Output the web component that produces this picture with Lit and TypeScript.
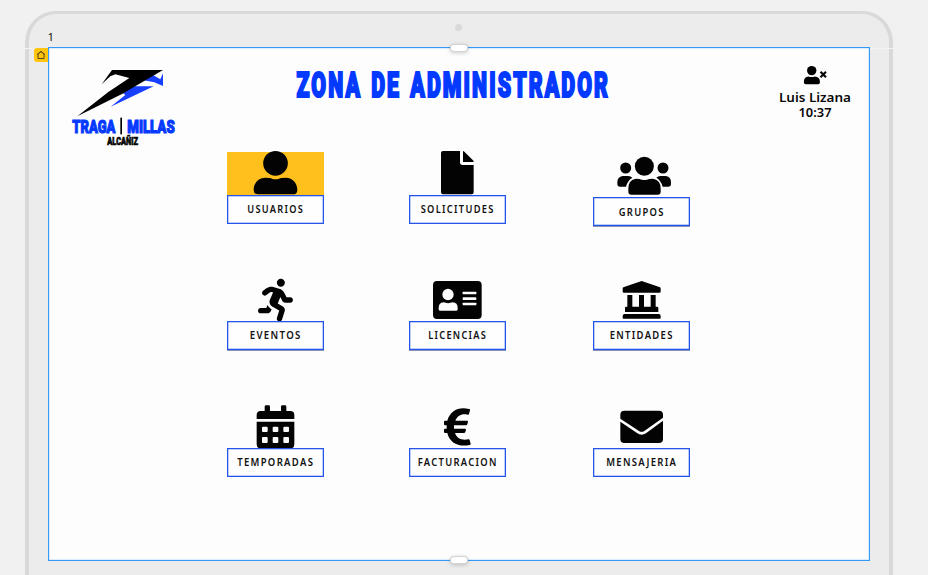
import { LitElement, html, svg, css, TemplateResult } from "lit";
import { customElement, property } from "lit/decorators.js";

interface Tile {
  label: string;
  length: number;
  viewBox: string;
  art: TemplateResult;
  active?: boolean;
  low?: boolean;
  shaded?: boolean;
}

const tiles: Tile[] = [
  {
    label: "USUARIOS", length: 56, viewBox: "21 18 291 132", active: true,
    art: svg`<circle cx="166.5" cy="55" r="37"/><path d="M136 98q15 0 20 3q10 3 21 0q5-3 20-3c22 0 35 18 35 36q0 14-13 14H114q-13 0-13-14c0-18 13-36 35-36z"/>`,
  },
  {
    label: "SOLICITUDES", length: 73, viewBox: "567 18 291 132",
    art: svg`<path d="M669 18H720V52q0 8 8 8H761V142q0 6-6 6H669q-6 0-6-6V24q0-6 6-6zM729 18q2 0 4 2L759 46q2 2 2 5H729z"/>`,
  },
  {
    label: "GRUPOS", length: 45, viewBox: "24 18 291 138", low: true, shaded: true,
    art: svg`<circle cx="178" cy="64" r="28.5"/><circle cx="122" cy="69" r="16.5"/><circle cx="234" cy="69" r="16.5"/><path d="M153 101q12 0 17 3q8 2 16 0q5-3 17-3q24 3 24 30v9q0 9-9 9H139q-9 0-9-9v-9q0-27 23-30zM113 93h17q7 0 12 5q-14 8-19 27H104q-7 0-7-7v-6q0-17 16-19zM243 93h-17q-7 0-12 5q14 8 19 27h18q7 0 7-7v-6q0-17-15-19z"/>`,
  },
  {
    label: "EVENTOS", length: 51, viewBox: "21 21 291 132", shaded: true,
    art: svg`<path transform="translate(114 26) scale(.252 .25)" d="M272 96c26.51 0 48-21.49 48-48S298.51 0 272 0s-48 21.49-48 48 21.49 48 48 48zM113.69 317.47l-14.8 34.52H32c-17.67 0-32 14.33-32 32s14.33 32 32 32h77.45c19.25 0 36.58-11.44 44.11-29.09l8.79-20.52-10.67-6.3c-17.32-10.23-30.06-25.37-37.99-42.61zM384 223.99h-44.03l-26.06-53.25c-12.5-25.55-35.45-44.23-61.78-50.94l-71.08-21.14c-28.3-6.8-57.77-.55-80.84 17.14l-39.67 30.41c-14.03 10.75-16.69 30.83-5.94 44.86s30.84 16.69 44.86 5.94l39.66-30.41c7.67-5.89 17.44-8 25.27-6.14l14.7 4.37-37.46 87.39c-12.62 29.48-1.31 64.01 26.3 80.31l84.98 50.17-27.47 87.73c-5.28 16.86 4.11 34.82 20.97 40.09 3.19 1 6.41 1.48 9.58 1.48 13.61 0 26.23-8.77 30.52-22.45l31.64-101.06c5.91-20.77-2.89-43.08-21.64-54.39l-61.24-36.14 31.31-78.28 20.27 41.43c8 16.34 24.92 26.89 43.11 26.89H384c17.67 0 32-14.33 32-32s-14.33-31.99-32-31.99z"/>`,
  },
  {
    label: "LICENCIAS", length: 58, viewBox: "567 21 291 132", shaded: true,
    art: svg`<rect x="639" y="33" width="146" height="114" rx="12"/><g fill="#fdfdfd"><circle cx="684" cy="73.500" r="17"/><path d="M671 97q13 5 27 0q15 1 15 17v4q0 4-4 4H660q-4 0-4-4v-4q0-16 15-17z"/><rect x="728" y="65" width="41" height="8" rx="2"/><rect x="728" y="82" width="41" height="8" rx="2"/><rect x="728" y="98" width="41" height="8" rx="2"/></g>`,
  },
  {
    label: "ENTIDADES", length: 63, viewBox: "24 21 291 132", shaded: true,
    art: svg`<path d="M170 33l55 19q2 1 2 4v9q0 3-4 3H117q-4 0-4-3v-9q0-3 2-4zM127 75h15v35h20V75h15v35h20V75h15v35h4q4 0 4 4v12H120v-12q0-4 4-4h3zM119 132h102q6 0 6 6v5q0 3-3 3H116q-3 0-3-3v-5q0-6 6-6z"/>`,
  },
  {
    label: "TEMPORADAS", length: 76, viewBox: "21 18 291 132",
    art: svg`<path d="M134 26q0-4 4-4h8q4 0 4 4v13h33V26q0-4 4-4h8q4 0 4 4v13h12q12 0 12 12v12H110V51q0-12 12-12h12z"/><path fill-rule="evenodd" d="M110 71H223V139q0 12-12 12H122q-12 0-12-12zM129 86q-3 0-3 3v10q0 3 3 3h11q3 0 3-3v-10q0-3-3-3zm32 0q-3 0-3 3v10q0 3 3 3h11q3 0 3-3v-10q0-3-3-3zm32 0q-3 0-3 3v10q0 3 3 3h11q3 0 3-3v-10q0-3-3-3zM129 117q-3 0-3 3v12q0 3 3 3h11q3 0 3-3v-12q0-3-3-3zm32 0q-3 0-3 3v12q0 3 3 3h11q3 0 3-3v-12q0-3-3-3zm32 0q-3 0-3 3v12q0 3 3 3h11q3 0 3-3v-12q0-3-3-3z"/>`,
  },
  {
    label: "FACTURACION", length: 79, viewBox: "567 16 291 132",
    art: svg`<path d="M748 31q3 0 2 4l-3 11q-1 3-4 2c-18-4-31 3-37 18h35q3 0 3 3l-2 8q-1 3-4 3h-36v10h33q3 0 3 3l-2 7q-1 3-4 3h-27c5 15 19 23 40 19q3-1 4 2l3 11q1 3-3 4c-33 7-60-6-67-36h-7q-3 0-3-3v-7q0-3 3-3h5V80h-5q-3 0-3-3v-8q0-3 3-3h7c8-29 34-43 65-35z"/>`,
  },
  {
    label: "MENSAJERIA", length: 70, viewBox: "24 18 291 132",
    art: svg`<path d="M118 38H222q12 0 12 12v9L179 98q-9 7-18 0L106 62V50q0-12 12-12zM106 71L156 105q14 10 28 0L234 68v55q0 12-12 12H118q-12 0-12-12z"/>`,
  },
];

@customElement("menu-tile")
export class MenuTile extends LitElement {
  @property({ attribute: false }) tile!: Tile;

  static styles = css`
    :host { display: block; width: 97px; }
    .icon { display: block; width: 97px; height: 44px; fill: #030303; }
    .low .icon { height: 46px; }
    .active .icon { background: linear-gradient(transparent 1px, #ffc01e 1px); }
    .button {
      box-sizing: border-box; display: block; width: 97px; height: 29px;
      padding: 0; border: 1px solid #2454ea; background: #fefefe;
      box-shadow: inset 0 0 0 0.5px #7c9cf5;
    }
    .shaded .button { box-shadow: 0 1px 0 #8a91b4, inset 0 0 0 0.5px #7c9cf5; }
    .caption { display: block; width: 95px; height: 27px; overflow: visible; }
    .caption text {
      font: 600 10.8px "Noto Sans", sans-serif; letter-spacing: 1.5px; fill: #111;
    }
  `;

  render() {
    const t = this.tile;
    return html`<div class="${t.active ? "active" : ""} ${t.low ? "low" : ""} ${t.shaded ? "shaded" : ""}">
      <svg class="icon" viewBox=${t.viewBox} preserveAspectRatio="none">${t.art}</svg>
      <button class="button">
        <svg class="caption" viewBox="0 0 95 27">
          <text x=${47.2 - t.length / 2} y=${t.low ? 17.8 : 16.8} textLength=${t.length + 1} lengthAdjust="spacingAndGlyphs">${t.label}</text>
        </svg>
      </button>
    </div>`;
  }
}

@customElement("app-root")
export class AppRoot extends LitElement {
  static styles = css`
    :host {
      display: block; width: 928px; height: 575px; overflow: hidden;
      background: #f1f1f1; box-sizing: border-box; padding: 11px 0 0 25px;
    }
    .device {
      position: relative; box-sizing: border-box; width: 868px; height: 620px;
      padding: 33px 19px 0 19px; border: solid #d9d9d9; border-width: 3px 4px; border-radius: 31px; background: #ececec;
    }
    .seam { position: absolute; left: -4px; right: -4px; top: 34px; height: 1px; background: #f3f3f3; }
    .camera { position: absolute; left: 426px; top: 10px; width: 7px; height: 7px; border-radius: 50%; background: #d9d9d9; }
    .page-number { position: absolute; left: 18.5px; top: 16px; font: 11.5px/13px "Noto Sans", sans-serif; color: #111; }
    .home {
      position: absolute; left: 5px; top: 34px; width: 14px; height: 14px;
      border-radius: 3px 0 0 3px; background: #ffc40c;
    }
    .home svg { display: block; width: 14px; height: 14px; }
    .screen {
      position: relative; box-sizing: border-box; width: 822px; height: 514px;
      border: 1px solid #369af5; background: #fdfdfd; box-shadow: inset 0 0 0 0.5px #b9dcfb;
    }
    .handle {
      position: absolute; left: 402px; width: 16px; height: 6px; border-radius: 4px;
      background: #fff; box-shadow: 0 0 0 1px #d4d4d4, 0 1px 4px 1px rgba(0, 0, 0, 0.2);
    }
    .top { top: -3px; }
    .bottom { bottom: -3px; }
    .header { display: flex; height: 103px; padding-left: 21px; }
    .logo { width: 108px; height: 82px; margin-top: 18px; overflow: visible; }
    .title { width: 324px; height: 45px; margin: 14px 0 0 112px; overflow: visible; }
    .account { width: 90px; height: 60px; margin: 14px 0 0 156px; }
    .logo text { font-family: Roboto, sans-serif; font-weight: 900; stroke-width: 3.5px; }
    .title text { font: 900 35.5px Roboto, sans-serif; letter-spacing: 3.5px; word-spacing: 3px; fill: #0439ff; stroke: #0439ff; stroke-width: 2.2px; }
    .account text { font: 600 12.8px "Noto Sans", sans-serif; fill: #080808; }
    .blue { fill: #0439ff; stroke: #0439ff; }
    .logo .black { fill: #050505; stroke: #050505; stroke-width: 2px; }
    .menu {
      display: grid; grid-template-columns: 182px 184px 97px;
      grid-template-rows: 126px 127px 76px; padding-left: 178px;
    }
  `;

  render() {
    return html`<div class="device">
      <div class="seam"></div>
      <div class="camera"></div>
      <div class="page-number">1</div>
      <div class="home">
        <svg viewBox="0 0 14 14" fill="none" stroke="#544514"><path d="M4 10.500V6L7 3.500 10 6v4.500zM3 6.500L7 3.500l4 3"/></svg>
      </div>
      <main class="screen">
        <header class="header">
          <svg class="logo" viewBox="150 183 324 246">
            <path fill="#173fff" d="M371 226l28-16 22 13 8-18v38l-26-11zM309 260l28-16h64l-129 61 44-35-10-8z"/>
            <path d="M276 195h153L306 267 172 334l93-73 63-42-42-11-15 6-26 24z"/>
            <text class="blue" x="157" y="383" font-size="54" textLength="129" lengthAdjust="spacingAndGlyphs">TRAGA</text>
            <rect x="301" y="338" width="5" height="50"/>
            <text class="blue" x="322" y="383" font-size="54" textLength="142" lengthAdjust="spacingAndGlyphs">MILLAS</text>
            <text class="black" x="262" y="419" font-size="31" textLength="92" lengthAdjust="spacingAndGlyphs">ALCAÑIZ</text>
          </svg>
          <svg class="title" viewBox="290 62 324 45">
            <text x="296.500" y="97.300" textLength="313.500" lengthAdjust="spacingAndGlyphs">ZONA DE ADMINISTRADOR</text>
          </svg>
          <svg class="account" viewBox="770 62 90 60">
            <circle cx="811.7" cy="70.6" r="4.700"/>
            <path d="M808.500 76.500q3.200 1.200 6.400 0 5 .5 5 5v1q0 1.700-1.700 1.700h-12.600q-1.700 0-1.700-1.700v-1q0-4.500 4.600-5z"/>
            <path d="M820.500 71.700l5.500 5.500M826 71.700l-5.500 5.500" fill="none" stroke="#080808" stroke-width="2.200"/>
            <text x="779" y="101.700" textLength="72" lengthAdjust="spacingAndGlyphs">Luis Lizana</text>
            <text x="798.500" y="117" textLength="33" lengthAdjust="spacingAndGlyphs">10:37</text>
          </svg>
        </header>
        <nav class="menu">${tiles.map((t) => html`<menu-tile .tile=${t}></menu-tile>`)}</nav>
        <div class="handle top"></div>
        <div class="handle bottom"></div>
      </main>
    </div>`;
  }
}
